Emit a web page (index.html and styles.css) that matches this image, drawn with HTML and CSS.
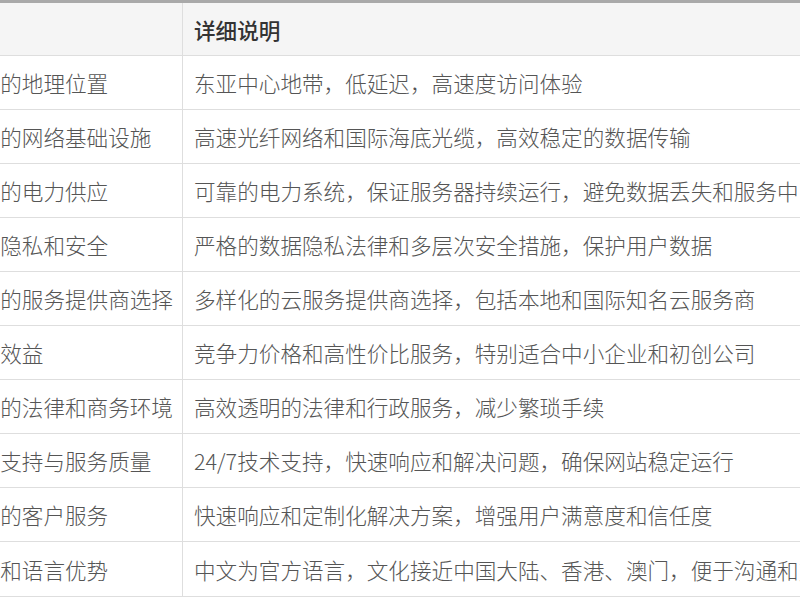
FILE: index.html
```html
<!DOCTYPE html>
<html lang="zh">
<head>
<meta charset="utf-8">
<link rel="stylesheet" href="styles.css">
</head>
<body>
<div class="table">
  <div class="row head"><div class="cell key">优势</div><div class="cell">详细说明</div></div>
  <div class="row"><div class="cell key">优越的地理位置</div><div class="cell">东亚中心地带，低延迟，高速度访问体验</div></div>
  <div class="row"><div class="cell key">先进的网络基础设施</div><div class="cell">高速光纤网络和国际海底光缆，高效稳定的数据传输</div></div>
  <div class="row"><div class="cell key">稳定的电力供应</div><div class="cell">可靠的电力系统，保证服务器持续运行，避免数据丢失和服务中断</div></div>
  <div class="row"><div class="cell key">数据隐私和安全</div><div class="cell">严格的数据隐私法律和多层次安全措施，保护用户数据</div></div>
  <div class="row"><div class="cell key">丰富的服务提供商选择</div><div class="cell">多样化的云服务提供商选择，包括本地和国际知名云服务商</div></div>
  <div class="row"><div class="cell key">成本效益</div><div class="cell">竞争力价格和高性价比服务，特别适合中小企业和初创公司</div></div>
  <div class="row"><div class="cell key">完善的法律和商务环境</div><div class="cell">高效透明的法律和行政服务，减少繁琐手续</div></div>
  <div class="row"><div class="cell key">技术支持与服务质量</div><div class="cell">24/7技术支持，快速响应和解决问题，确保网站稳定运行</div></div>
  <div class="row"><div class="cell key">优质的客户服务</div><div class="cell">快速响应和定制化解决方案，增强用户满意度和信任度</div></div>
  <div class="row"><div class="cell key">文化和语言优势</div><div class="cell">中文为官方语言，文化接近中国大陆、香港、澳门，便于沟通和交流</div></div>
</div>
</body>
</html>
```
FILE: styles.css
```css
html, body {
  margin: 0;
  padding: 0;
  background: #ffffff;
  overflow: hidden;
  width: 800px;
  height: 600px;
}
.table {
  margin-left: -54px;
  width: 1100px;
  border-top: 3px solid #a9a9a9;
  font-family: "Microsoft YaHei", "Noto Sans CJK SC", "Noto Sans", sans-serif;
  font-size: 21.6px;
  font-weight: 300;
  color: #555555;
}
.row {
  display: grid;
  grid-template-columns: 237px 1fr;
  height: 54px;
  box-sizing: border-box;
  border-bottom: 1px solid #dedede;
}
.row:last-child {
  height: 55px;
}
.row.head {
  height: 53px;
  background: #f5f5f5;
  color: #333333;
  font-weight: 500;
}
.cell {
  display: flex;
  align-items: center;
  padding: 0 11px;
  white-space: nowrap;
  overflow: hidden;
}
.key {
  border-right: 1px solid #dedede;
}
```
